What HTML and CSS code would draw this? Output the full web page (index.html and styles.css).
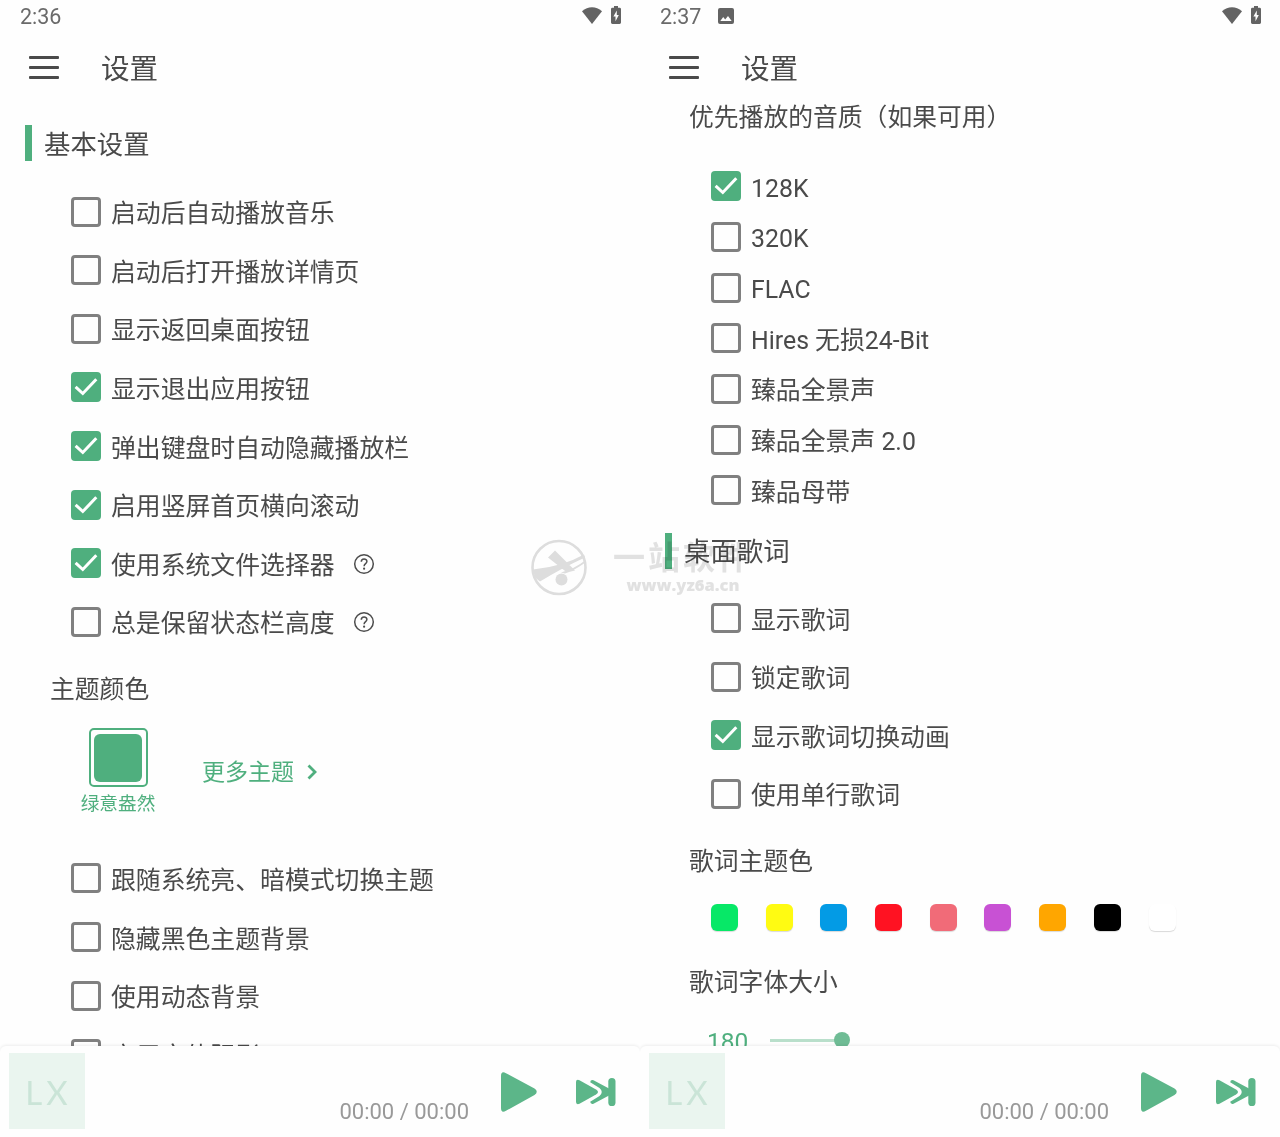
FILE: index.html
```
<!DOCTYPE html>
<html lang="zh-CN">
  <head>
    <meta charset="utf-8">
    <meta name="viewport" content="width=device-width, initial-scale=1.0">
    <title>设置</title>
    <link rel="stylesheet" href="styles.css">
  </head>
  <body>

  <!-- shared icons -->
  <svg class="defs" width="0" height="0">
    <symbol id="i_wifi" viewBox="0 0 20 17"><path d="M0 4.2C6-1 14-1 20 4.2L10 17z"/></symbol>
    <symbol id="i_battery" viewBox="0 0 10 18"><path fill-rule="evenodd" d="M3 0h4v1.8h1.6Q10 1.8 10 3.2v13.4Q10 18 8.6 18H1.4Q0 18 0 16.6V3.2Q0 1.8 1.4 1.8H3zM5.8 4.6L2.4 10.6h2.1v4.6L7.8 9H5.8z"/></symbol>
    <symbol id="i_picture" viewBox="0 0 16 16"><path fill-rule="evenodd" d="M2 0h12q2 0 2 2v12q0 2-2 2H2q-2 0-2-2V2q0-2 2-2zM2.3 13h11.4L10 8l-2.8 3.4L5.2 9z"/></symbol>
    <symbol id="i_check" viewBox="0 0 30 30"><path d="M4.600 14.800l7.200 6.700L25.300 7.300" fill="none" stroke="#fff" stroke-width="3"/></symbol>
    <symbol id="i_help" viewBox="0 0 22 22"><g fill="none" stroke="#4d4d4d" stroke-width="1.5"><circle cx="11" cy="11" r="9.3"/><path d="M8.3 8.8c0-3.8 5.6-3.6 5.6-.3 0 2.1-2.8 2.2-2.8 4.7"/></g><circle cx="11.1" cy="15.7" r="1.1" fill="#4d4d4d"/></symbol>
    <symbol id="i_play" viewBox="0 0 36 40"><path d="M0 4Q0-1.5 5 1.2L33.5 16.5Q38 19.7 33.5 23L5 38.8Q0 41.5 0 36z"/></symbol>
    <symbol id="i_next" viewBox="0 0 40 28"><path d="M0 4Q0 1 3.500 2.200L20 11.500Q24 14 20 16.500L3.500 25.800Q0 27 0 24z"/><path d="M14.200 4.200Q14.500 1.500 17.500 2.300L33 10.500v7L17.500 25.700Q14.500 26.500 14.200 23.800L23.500 18Q28 14 23.500 10z"/><rect x="32.300" y="0" width="7.200" height="28" rx="3.600"/></symbol>
  </svg>

  <div class="screens">
    <div class="screen">
      <div class="status-bar">
        <span class="time">2:36</span>
        <svg class="wifi"><use href="#i_wifi"/></svg>
        <svg class="battery"><use href="#i_battery"/></svg>
      </div>
      <div class="header">
        <div class="menu"><i></i><i></i><i></i></div>
        <h1>设置</h1>
      </div>
      <div class="content">
        <h2 class="first">基本设置</h2>
        <div class="row"><span class="box"></span><label>启动后自动播放音乐</label></div>
        <div class="row"><span class="box"></span><label>启动后打开播放详情页</label></div>
        <div class="row"><span class="box"></span><label>显示返回桌面按钮</label></div>
        <div class="row"><svg class="box on"><use href="#i_check"/></svg><label>显示退出应用按钮</label></div>
        <div class="row"><svg class="box on"><use href="#i_check"/></svg><label>弹出键盘时自动隐藏播放栏</label></div>
        <div class="row"><svg class="box on"><use href="#i_check"/></svg><label>启用竖屏首页横向滚动</label></div>
        <div class="row"><svg class="box on"><use href="#i_check"/></svg><label>使用系统文件选择器</label><svg class="help"><use href="#i_help"/></svg></div>
        <div class="row"><span class="box"></span><label>总是保留状态栏高度</label><svg class="help"><use href="#i_help"/></svg></div>
        <h3 class="theme-title">主题颜色</h3>
        <div class="themes">
          <div class="theme">
            <div class="theme-frame"><div class="theme-color"></div></div>
            <span>绿意盎然</span>
          </div>
          <div class="more">更多主题
            <svg viewBox="0 0 10 16"><path d="M1.5 1.5L8 8l-6.5 6.5" fill="none" stroke="#4faf7e" stroke-width="2.8"/></svg>
          </div>
        </div>
        <div class="row"><span class="box"></span><label>跟随系统亮、暗模式切换主题</label></div>
        <div class="row"><span class="box"></span><label>隐藏黑色主题背景</label></div>
        <div class="row"><span class="box"></span><label>使用动态背景</label></div>
        <div class="row"><span class="box"></span><label>启用字体阴影</label></div>
      </div>
      <div class="player">
        <div class="cover">LX</div>
        <span class="duration">00:00 / 00:00</span>
        <svg class="play"><use href="#i_play"/></svg>
        <svg class="next"><use href="#i_next"/></svg>
      </div>
    </div>

    <div class="screen">
      <div class="status-bar">
        <span class="time">2:37</span>
        <svg class="picture"><use href="#i_picture"/></svg>
        <svg class="wifi"><use href="#i_wifi"/></svg>
        <svg class="battery"><use href="#i_battery"/></svg>
      </div>
      <div class="header">
        <div class="menu"><i></i><i></i><i></i></div>
        <h1>设置</h1>
      </div>
      <div class="content">
        <h3 class="quality-title">优先播放的音质（如果可用）</h3>
        <div class="quality">
          <div class="row"><svg class="box on"><use href="#i_check"/></svg><label>128K</label></div>
          <div class="row"><span class="box"></span><label>320K</label></div>
          <div class="row"><span class="box"></span><label>FLAC</label></div>
          <div class="row"><span class="box"></span><label>Hires 无损24-Bit</label></div>
          <div class="row"><span class="box"></span><label>臻品全景声</label></div>
          <div class="row"><span class="box"></span><label>臻品全景声 2.0</label></div>
          <div class="row"><span class="box"></span><label>臻品母带</label></div>
        </div>
        <h2>桌面歌词</h2>
        <div class="row"><span class="box"></span><label>显示歌词</label></div>
        <div class="row"><span class="box"></span><label>锁定歌词</label></div>
        <div class="row"><svg class="box on"><use href="#i_check"/></svg><label>显示歌词切换动画</label></div>
        <div class="row"><span class="box"></span><label>使用单行歌词</label></div>
        <h3 class="lyric-title">歌词主题色</h3>
        <div class="colors">
          <i class="green"></i>
          <i class="yellow"></i>
          <i class="blue"></i>
          <i class="red"></i>
          <i class="pink"></i>
          <i class="purple"></i>
          <i class="orange"></i>
          <i class="black"></i>
          <i class="white"></i>
        </div>
        <h3>歌词字体大小</h3>
        <div class="slider">
          <span>180</span>
          <div class="track"></div>
          <div class="knob"></div>
        </div>
      </div>
      <div class="player">
        <div class="cover">LX</div>
        <span class="duration">00:00 / 00:00</span>
        <svg class="play"><use href="#i_play"/></svg>
        <svg class="next"><use href="#i_next"/></svg>
      </div>
    </div>

    <!-- site watermark, lies over both screens -->
    <div class="watermark">
      <svg viewBox="0 0 56 56">
        <circle cx="28" cy="28" r="26.5" fill="none" stroke="#dedede" stroke-width="2.6"/>
        <path d="M17 18L24 11 44 31 36 33zM2 30Q32 27 53 15l1 3Q32 28 9 42L4 38zM30 33Q44 29 54 21l-1 3Q43 31 34 34z" fill="#dedede"/>
        <circle cx="30.500" cy="40" r="6" fill="#dedede"/>
      </svg>
      <div class="watermark-text">
        <b>一站软件</b>
        <span>www.yz6a.cn</span>
      </div>
    </div>
  </div>

  </body>
</html>
```
FILE: styles.css
```
body {
    margin: 0;
    font-family: Roboto, "Noto Sans CJK SC", sans-serif;
    color: #4a4a4a;
    background-color: #fefefe;
}

.defs {
    display: block;
}

/* two phone screens side by side */
.screens {
    position: relative;
    display: flex;
    width: 1280px;
    height: 1137px;
    overflow: hidden;
}
.screen {
    width: 640px;
    height: 1137px;
    display: flex;
    flex-direction: column;
    overflow: hidden;
}

/* status bar */
.status-bar {
    box-sizing: border-box;
    height: 34px;
    display: flex;
    align-items: center;
    padding: 0 19px 4px 20px;
    fill: #636363;
}
.time {
    margin-right: auto;
    font-size: 21.5px;
    line-height: 30px;
    color: #6a6a6a;
    padding-top: 4px;
}
.picture {
    width: 16px;
    height: 16px;
    margin-top: 2px;
    margin-right: auto;
}
.time:has(+ .picture) {
    margin-right: 17px;
}
.wifi {
    width: 20px;
    height: 17px;
    margin-right: 9px;
}
.battery {
    width: 10px;
    height: 18px;
}

/* title bar */
.header {
    height: 66px;
    flex-shrink: 0;
    display: flex;
    align-items: center;
    padding-left: 29px;
}
.menu {
    width: 30px;
    display: grid;
    gap: 7px;
    margin-right: 42px;
}
.menu i {
    height: 3px;
    border-radius: 1px;
    background-color: #4a4a4a;
}
h1, h2, h3 {
    margin: 0;
    font-weight: 400;
}
h1 {
    padding-top: 4px;
    font-size: 28.6px;
    line-height: 40px;
}

/* settings list */
.content {
    flex: 1;
    min-height: 0;
    overflow: hidden;
}
h2 {
    height: 36px;
    margin: 17px 0 20px 25px;
    padding-left: 12px;
    border-left: 7px solid #4faf7e;
    font-size: 26.4px;
    line-height: 39px;
}
h2.first {
    margin: 25px 0 21.4px 25px;
    line-height: 40px;
}
h3 {
    height: 32px;
    padding-left: 49px;
    font-size: 24.8px;
    line-height: 35px;
}
.row {
    height: 58.6px;
    display: flex;
    align-items: center;
    padding-left: 71px;
    font-size: 24.85px;
}
.quality .row {
    height: 50.7px;
}
.row label {
    margin-left: 10px;
    padding-top: 5px;
    line-height: 30px;
}
.quality .row label {
    padding-top: 4.5px;
}
.box {
    box-sizing: border-box;
    width: 30px;
    height: 30px;
    border: 3px solid #808080;
    border-radius: 4px;
}
.box.on {
    border: none;
    background-color: #4faf7e;
}
.help {
    width: 22px;
    height: 22px;
    margin-top: 1px;
    margin-left: 18px;
}
.theme-title {
    margin-top: 21px;
    padding-left: 50px;
}
.quality-title {
    margin-bottom: 29px;
}
.lyric-title {
    margin-top: 21px;
}

/* theme picker */
.themes {
    height: 121px;
    margin: 24px 0 0 80px;
    display: flex;
    align-items: flex-start;
    color: #4faf7e;
}
.theme {
    width: 76px;
    display: flex;
    flex-direction: column;
    align-items: center;
    font-size: 18.7px;
    line-height: 35px;
}
.theme-frame {
    box-sizing: border-box;
    width: 59px;
    height: 59px;
    padding: 3.5px;
    border: 2px solid #4faf7e;
    border-radius: 5px;
}
.theme-color {
    height: 48px;
    border-radius: 6px;
    background-color: #4faf7e;
}
.more {
    display: flex;
    align-items: center;
    margin: 29px 0 0 46px;
    font-size: 23px;
    line-height: 32px;
}
.more svg {
    width: 10px;
    height: 16px;
    margin-top: -2px;
    margin-left: 13px;
}

/* lyric colors */
.colors {
    display: flex;
    gap: 27.7px;
    margin: 28px 0 34px 71px;
}
.colors i {
    width: 27px;
    height: 27px;
    border-radius: 6px;
    box-shadow: 0 1px 1px rgba(0,0,0,0.15);
}
.green { background-color: #07e867; }
.yellow { background-color: #fffb12; }
.blue { background-color: #039be5; }
.red { background-color: #ff1222; }
.pink { background-color: #f16b78; }
.purple { background-color: #c851d4; }
.orange { background-color: #ffa600; }
.black { background-color: #000; }
.white { background-color: #fff; }

.slider {
    height: 32px;
    display: flex;
    align-items: center;
    margin-top: 27px;
    padding-left: 67px;
    font-size: 24.5px;
    color: #4faf7e;
}
.slider span {
    padding-top: 2px;
}
.track {
    width: 65px;
    height: 3px;
    margin-left: 22px;
    background-color: #b9dfcb;
}
.knob {
    width: 16px;
    height: 16px;
    margin-left: -1px;
    border-radius: 50%;
    background-color: #6fbc95;
}

/* player bar */
.player {
    height: 91px;
    box-sizing: border-box;
    flex-shrink: 0;
    position: relative;
    display: flex;
    padding: 7px 24px 8px 9px;
    border-radius: 6px 6px 0 0;
    background-color: #fefefe;
    box-shadow: 0 -1px 3px rgba(0,0,0,0.07);
    fill: #5cb689;
}
.cover {
    width: 76px;
    height: 76px;
    box-sizing: border-box;
    padding-left: 3px;
    text-align: center;
    font-family: Lato, sans-serif;
    font-size: 33px;
    line-height: 79px;
    letter-spacing: 4px;
    color: #cae4d7;
    background-color: #eaf5ef;
}
.duration {
    margin: 45px 32px 0 auto;
    font-size: 22px;
    line-height: 28px;
    color: #999;
}
.play {
    width: 36px;
    height: 40px;
    margin: 19px 39px 0 0;
}
.next {
    width: 40px;
    height: 28px;
    margin-top: 25px;
}

.watermark {
    position: absolute;
    left: 531px;
    top: 539px;
    display: flex;
    mix-blend-mode: multiply;
    color: #e2e2e2;
}
.watermark svg {
    width: 56px;
    height: 57px;
}
.watermark-text {
    width: 138px;
    margin-left: 27px;
    display: flex;
    flex-direction: column;
    align-items: center;
}
.watermark-text b {
    font-size: 32px;
    line-height: 38px;
    letter-spacing: 3px;
    white-space: nowrap;
}
.watermark-text span {
    font-family: "Open Sans", sans-serif;
    font-size: 16.5px;
    font-weight: 800;
    line-height: 16px;
}
```
